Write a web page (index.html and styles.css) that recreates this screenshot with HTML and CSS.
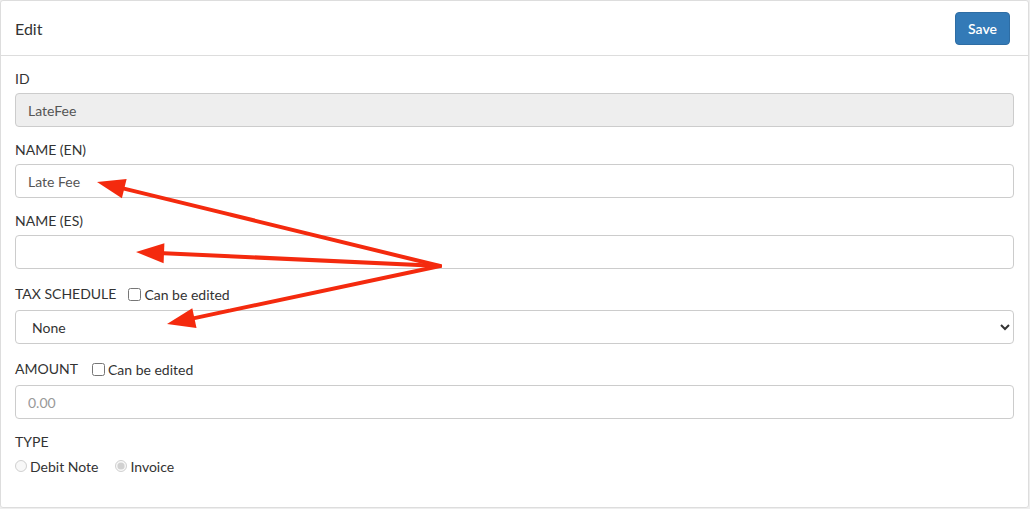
FILE: index.html
```html
<!DOCTYPE html>
<html>
<head>
  <title>Edit</title>
  <link rel="stylesheet" href="styles.css">
</head>
<body>
  <div class="panel">
    <div class="panel-heading">
      <span class="panel-title">Edit</span>
      <button class="btn-save">Save</button>
    </div>
    <div class="panel-body">
      <div class="form-group">
        <label class="field-label">ID</label>
        <input class="form-control" type="text" value="LateFee" readonly>
      </div>
      <div class="form-group">
        <label class="field-label">NAME (EN)</label>
        <input class="form-control" type="text" value="Late Fee">
      </div>
      <div class="form-group">
        <label class="field-label">NAME (ES)</label>
        <input class="form-control" type="text" value="">
      </div>
      <div class="form-group">
        <div class="label-row">
          <label class="field-label">TAX SCHEDULE</label>
          <label class="check"><input type="checkbox"> Can be edited</label>
        </div>
        <select class="form-control">
          <option>None</option>
        </select>
      </div>
      <div class="form-group">
        <div class="label-row">
          <label class="field-label">AMOUNT</label>
          <label class="check check-wide"><input type="checkbox"> Can be edited</label>
        </div>
        <input class="form-control" type="text" placeholder="0.00">
      </div>
      <div class="form-group">
        <label class="field-label">TYPE</label>
        <div class="radios">
          <label class="radio"><input type="radio" name="type" disabled> Debit Note</label>
          <label class="radio"><input type="radio" name="type" checked disabled> Invoice</label>
        </div>
      </div>
    </div>

    <!-- annotation arrows -->
    <svg class="arrows" width="1030" height="509" viewBox="0 0 1030 509">
      <g stroke="#f42a0e" stroke-width="4" stroke-linecap="round">
        <line x1="440" y1="266" x2="124" y2="188.6"/>
        <line x1="440" y1="266" x2="164" y2="253.2"/>
        <line x1="440" y1="266" x2="194.4" y2="318.1"/>
      </g>
      <g fill="#f42a0e">
        <polygon points="97,182 126.6,178.9 121.9,198.3"/>
        <polygon points="136,252 164.4,243.2 163.6,263.2"/>
        <polygon points="167,324 196.5,327.9 192.3,308.3"/>
      </g>
    </svg>
  </div>
</body>
</html>
```

FILE: styles.css
```css
body {
  margin: 0;
  background: #eeeeee;
  font-family: Lato, 'Open Sans', Arial, sans-serif;
  font-size: 14px;
  color: #333;
}
.panel {
  position: relative;
  width: 1027px;
  background: #fff;
  border: 1px solid #dddddd;
  border-radius: 3px;
}
.panel-heading {
  height: 54px;
  padding: 0 18px 0 14px;
  border-bottom: 1px solid #dddddd;
  display: flex;
  align-items: center;
  justify-content: space-between;
}
.panel-title {
  font-size: 16px;
  color: #333;
}
.btn-save {
  font-family: inherit;
  font-size: 14px;
  font-weight: 600;
  color: #fff;
  background: #337ab7;
  border: 1px solid #2e6da4;
  border-radius: 4px;
  width: 55px;
  height: 33px;
  padding: 0;
  margin-top: 1px;
}
.panel-body {
  padding: 13px 14px 31px 14px;
}
.form-group {
  margin-bottom: 13px;
}
.form-group:last-child {
  margin-bottom: 0;
}
.field-label {
  display: block;
  line-height: 20px;
  margin-bottom: 4px;
  color: #333;
}
.label-row {
  display: flex;
  align-items: center;
  height: 24px;
  margin-bottom: 4px;
}
.label-row .field-label {
  margin-bottom: 0;
}
.check {
  display: flex;
  align-items: center;
  margin-left: 12px;
  color: #333;
}
.check-wide {
  margin-left: 14px;
}
.check input {
  width: 13px;
  height: 13px;
  margin: 0 3px 0 0;
}
.form-control {
  display: block;
  box-sizing: border-box;
  width: 100%;
  height: 34px;
  padding: 6px 12px;
  font-family: inherit;
  font-size: 14px;
  color: #555;
  background: #fff;
  border: 1px solid #cccccc;
  border-radius: 4px;
}
.form-control[readonly] {
  background: #eeeeee;
}
.form-control::placeholder {
  color: #999;
}
select.form-control {
  padding-left: 12px;
  color: #333;
}
.radios {
  display: flex;
  align-items: center;
  height: 20px;
}
.radio {
  display: flex;
  align-items: center;
  margin-right: 17px;
  color: #333;
}
.radio input {
  width: 12px;
  height: 12px;
  margin: 0 3px 0 0;
}
.arrows {
  position: absolute;
  left: -1px;
  top: -1px;
  pointer-events: none;
}
```
